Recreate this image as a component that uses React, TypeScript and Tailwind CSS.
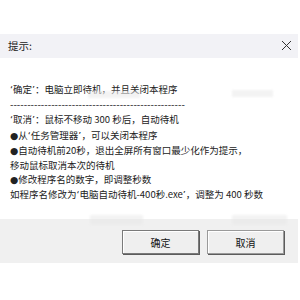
import type { ReactNode } from 'react'

// quotes and bullets use a Latin face so they stay narrow, as in the original dialog
const Q = ({ children }: { children: ReactNode }) => (
  <span style={{ fontFamily: '"DejaVu Sans", sans-serif' }}>{children}</span>
)

const LINES: ReactNode[] = [
  <>
    <Q>‘</Q>确定<Q>’</Q>：电脑立即待机，并且关闭本程序
  </>,
  <Q>---------------------------------------------------</Q>,
  <>
    <Q>‘</Q>取消<Q>’</Q>：鼠标不移动 300 秒后，自动待机
  </>,
  <>
    <Q>●</Q>从<Q>‘</Q>任务管理器<Q>’</Q>，可以关闭本程序
  </>,
  <>
    <Q>●</Q>自动待机前20秒，退出全屏所有窗口最少化作为提示，
  </>,
  <>移动鼠标取消本次的待机</>,
  <>
    <Q>●</Q>修改程序名的数字，即调整秒数
  </>,
  <>
    如程序名修改为<Q>‘</Q>电脑自动待机-400秒.exe<Q>’</Q>，调整为 400 秒数
  </>,
]

function DialogButton({ label, primary }: { label: string; primary?: boolean }) {
  return (
    <button
      className={`flex h-[24px] w-[77px] items-center justify-center border bg-[#efefef] text-[10px] text-[#111] shadow-[inset_1px_1px_0_#ffffff,1px_1px_0_#5c5c5c] ${
        primary ? 'border-[#7a7a7a]' : 'border-[#9a9a9a]'
      }`}
    >
      {label}
    </button>
  )
}

export default function App() {
  return (
    <div
      className="relative h-[300px] w-[300px] overflow-hidden bg-white pt-[34px]"
      style={{ fontFamily: '"Noto Sans CJK SC", "Noto Sans", sans-serif' }}
    >
      <div className="flex w-[298px] flex-col">
        {/* ── Title bar ─────────────────────────────── */}
        <div className="flex h-[24px] items-center justify-between bg-[#f2f2f6] pl-[8px] pr-[6px]">
          <span className="text-[10.5px] text-[#222]">提示:</span>
          <svg width="11" height="11" viewBox="0 0 11 11" className="mb-[2px]">
            <path d="M1 1L10 10M10 1L1 10" stroke="#333" strokeWidth="1" fill="none" />
          </svg>
        </div>

        {/* ── Message ───────────────────────────────── */}
        <div className="h-[161px] bg-white pl-[10px] pt-[24px] text-[9.5px] leading-[14.2px] text-[#222]">
          {LINES.map((l, i) => (
            <div key={i} className="whitespace-nowrap">
              {l}
            </div>
          ))}
        </div>

        {/* ── Buttons ───────────────────────────────── */}
        <div className="flex h-[44px] justify-end gap-[8px] bg-[#f0f0f0] pr-[14px] pt-[11px]">
          <DialogButton label="确定" primary />
          <DialogButton label="取消" />
        </div>
      </div>

      {/* faint smudges over the picture */}
      <div className="absolute left-[88px] top-[91px] h-[7px] w-[52px] bg-[#ececec] opacity-60 blur-[1px]" />
      <div className="absolute left-[232px] top-[90px] h-[7px] w-[41px] bg-[#ececec] opacity-60 blur-[1px]" />
      <div className="absolute left-[90px] top-[215px] h-[10px] w-[53px] bg-[#e8e8e8] opacity-50 blur-[1px]" />
      <div className="absolute left-[232px] top-[215px] h-[10px] w-[55px] bg-[#e8e8e8] opacity-50 blur-[1px]" />
    </div>
  )
}
